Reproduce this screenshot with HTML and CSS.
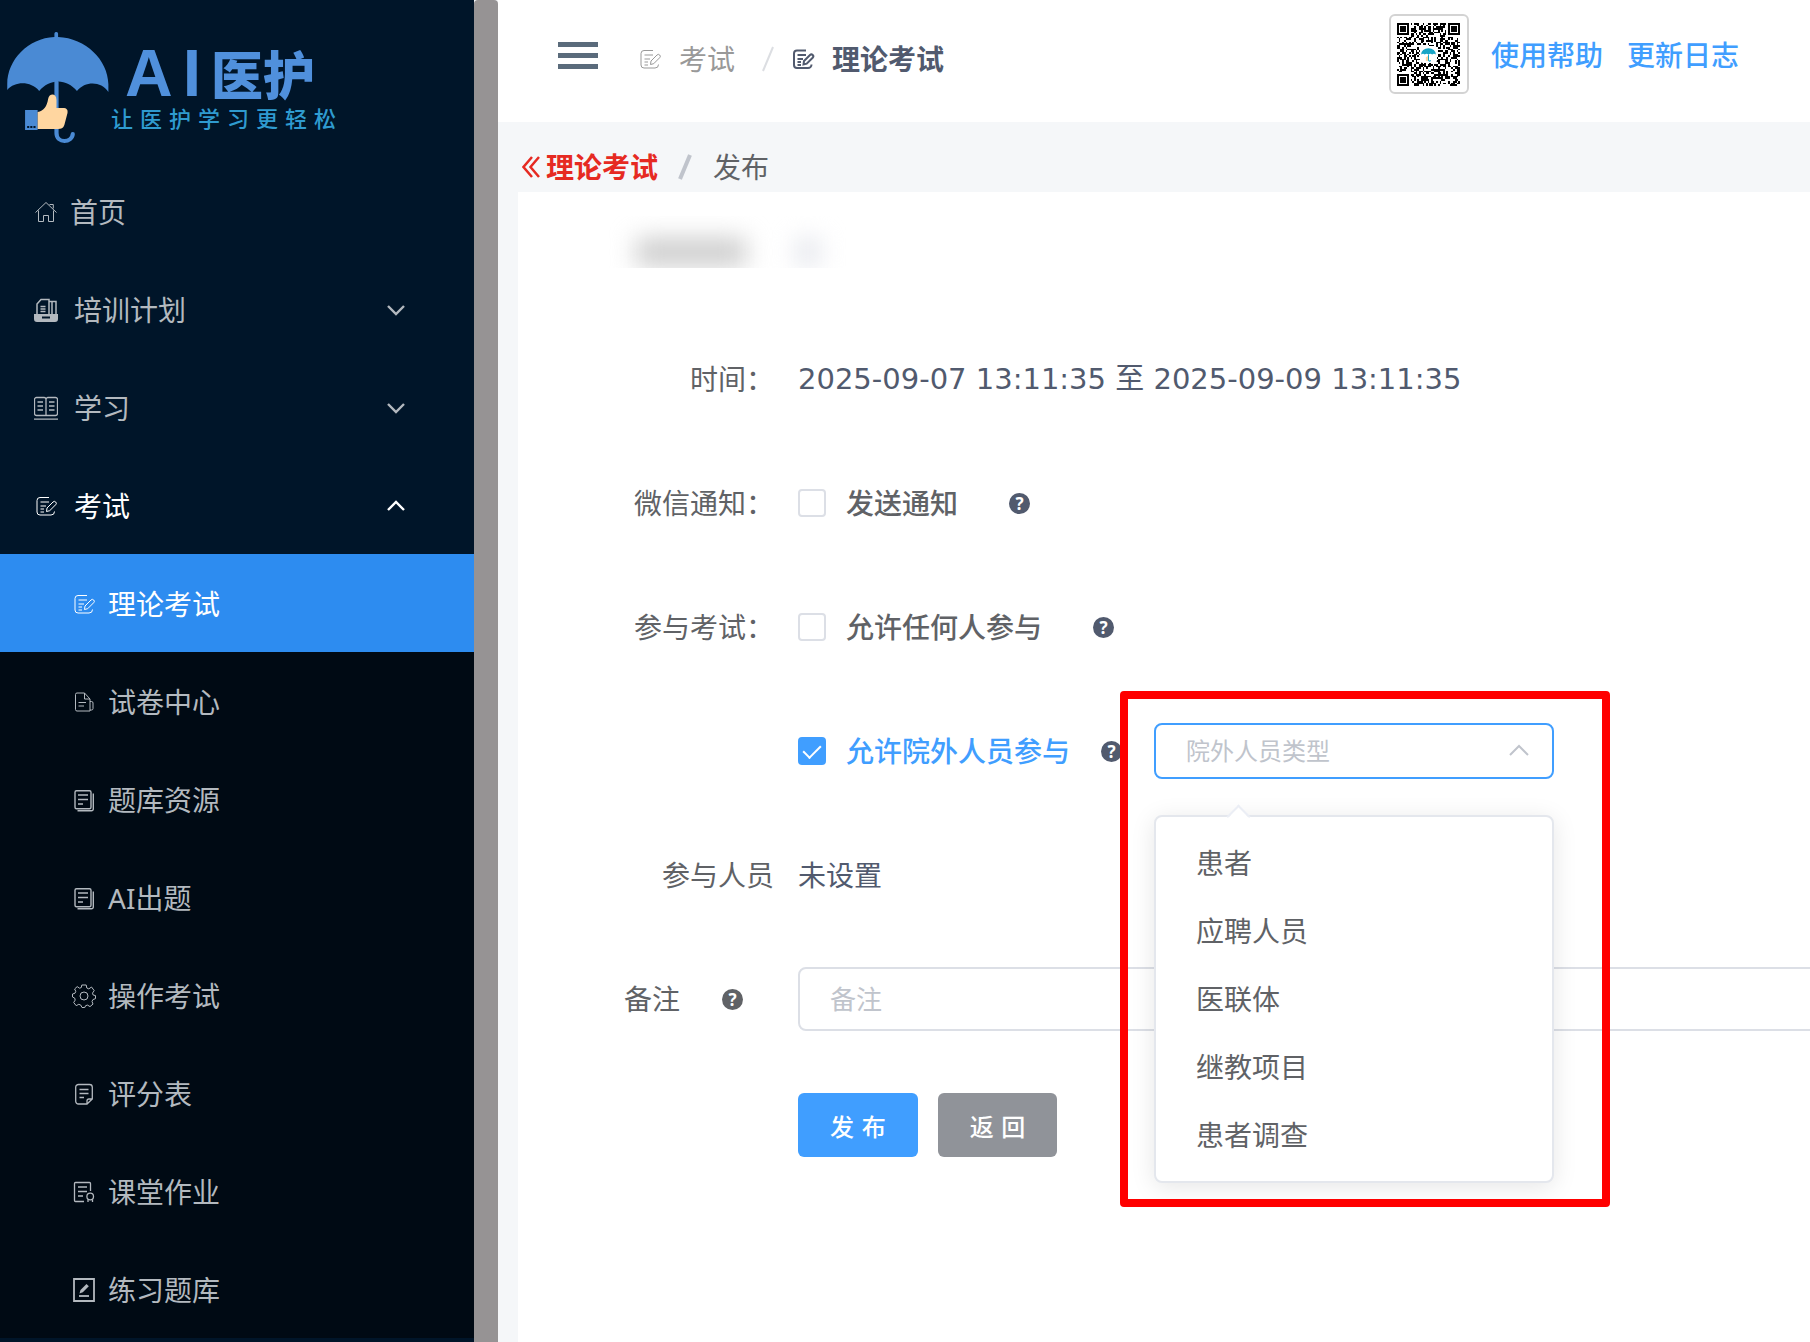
FILE: index.html
```html
<!DOCTYPE html>
<html lang="zh-CN">
<head>
<meta charset="UTF-8" />
<meta name="viewport" content="width=device-width, initial-scale=1.0"/>
<title>AI医护 - 理论考试</title>
<link rel="stylesheet" href="styles.css">
</head>
<body>
<!-- Shared icons -->
<svg class="defs" aria-hidden="true">
  <symbol id="i-exam" viewBox="0 0 24 24">
    <path d="M15 3.500H6a3 3 0 0 0-3 3V18a3 3 0 0 0 3 3h11a3.500 3.500 0 0 0 3.500-3.500M6.500 8H15M6.500 12H12M6.500 15H10M6.500 18H10"/>
    <path d="M12.500 17.500l.5-3.500 6-6a1.800 1.800 0 0 1 2.700 2.700l-6 6z"/>
  </symbol>
  <symbol id="i-bank" viewBox="0 0 24 24">
    <path d="M4.500 2.800h13a1.500 1.500 0 0 1 1.500 1.500v15a1.500 1.500 0 0 1-1.500 1.500h-13A1.500 1.500 0 0 1 3 19.300v-15a1.500 1.500 0 0 1 1.500-1.500zM6 7h10M6 11.500h10M6 16h5M5.500 22.800h14a1.800 1.800 0 0 0 1.800-1.800V5.500" stroke-width="1.400"/>
  </symbol>
  <symbol id="i-down" viewBox="0 0 18 12"><path d="M1 2l8 8 8-8" stroke-width="2.400"/></symbol>
</svg>

<div class="app">
  <aside class="sidebar">
    <div class="logo">
      <svg class="logo-mark" viewBox="0 0 104 114" preserveAspectRatio="none" aria-hidden="true">
        <path fill="#4a8ad4" d="M50 4.500a1.800 1.800 0 0 1 3.500 0V8C80 9 101 31 101.500 55v8c-7-11-22-11-30-1-5-6-11-9.500-18-9.500s-13 3.500-18 9.500c-8-10-23-10-30.500-1v-6C5 31 25 9 50 8z"/>
        <path fill="none" stroke="#4a8ad4" stroke-width="4" stroke-linecap="round" d="M52 53v51c0 11 15 10 15.500 1"/>
        <path fill="#4a8ad4" d="M22 81h12v20H22z"/>
        <path fill="#001529" d="M24 97h2v2h-2zM27 97h2v2h-2zM30 97h2v2h-2z"/>
        <path fill="#ffd6a0" d="M34 83c6-1 9-6 10-13 1-6 8-6 8 1v8h6c4 0 5 2 4.500 5l-3 12c-1 3-3 4-6 4H34z"/>
      </svg>
      <div class="logo-text">
        <div class="logo-name"><span>A</span><span>I</span><b>医护</b></div>
        <div class="logo-slogan">让 医 护 学 习 更 轻 松</div>
      </div>
    </div>

    <nav class="menu">
      <a class="menu-item home" href="#">
        <svg class="icon" viewBox="0 0 24 24"><path d="M1.500 12.500L12 2.500l10.500 10M4.500 10.500V21.500h5v-6h5v6h5v-11M15.500 4.500h3.800v4"/></svg>
        <span>首页</span>
      </a>
      <a class="menu-item" href="#">
        <svg class="icon" viewBox="0 0 24 24"><path d="M3 16V6l4-4.500h8V16M15 3.500h3V16M18 3.500h4V16M6.500 8.500h5M6.500 11h5M6.500 13.500h5" stroke-width="1.500"/><path fill="currentColor" stroke="none" d="M0 16h24v5a3 3 0 0 1-3 3H3a3 3 0 0 1-3-3zM8 18.500v2h8v-2z" fill-rule="evenodd"/></svg>
        <span>培训计划</span>
        <svg class="arrow"><use href="#i-down"/></svg>
      </a>
      <a class="menu-item" href="#">
        <svg class="icon" viewBox="0 0 24 24"><path d="M12 19.500H2.500a2 2 0 0 1-2-2v-14a2 2 0 0 1 2-2H10a2 2 0 0 1 2 2 2 2 0 0 1 2-2h7.500a2 2 0 0 1 2 2v14a2 2 0 0 1-2 2zM12 3v16.500M0 23.200h24M3.500 6H9M3.500 10H9M3.500 14H9M15 6h5.500M15 10h5.500M15 14h5.500" stroke-width="1.300"/></svg>
        <span>学习</span>
        <svg class="arrow"><use href="#i-down"/></svg>
      </a>
      <a class="menu-item open" href="#">
        <svg class="icon"><use href="#i-exam"/></svg>
        <span>考试</span>
        <svg class="arrow"><use href="#i-down"/></svg>
      </a>
      <div class="submenu">
        <a class="menu-item active" href="#"><svg class="icon"><use href="#i-exam"/></svg><span>理论考试</span></a>
        <a class="menu-item" href="#">
          <svg class="icon" viewBox="0 0 24 24"><path d="M18 21H5a1.500 1.500 0 0 1-1.500-1.500v-15A1.500 1.500 0 0 1 5 3h7.500l5.500 6zM12.500 3v6H18M18 11.500h1.500a1.500 1.500 0 0 1 1.500 1.500v5.500a1.500 1.500 0 0 1-1.500 1.500H18M6.500 12.500H14M6.500 16H12"/></svg>
          <span>试卷中心</span>
        </a>
        <a class="menu-item" href="#"><svg class="icon"><use href="#i-bank"/></svg><span>题库资源</span></a>
        <a class="menu-item" href="#"><svg class="icon"><use href="#i-bank"/></svg><span>AI出题</span></a>
        <a class="menu-item" href="#">
          <svg class="icon" viewBox="0 0 24 24"><circle cx="12" cy="12" r="4"/><path d="M9.800 1h4.400l.6 3 2 .9L19.500 3l2.700 3.600-1.700 2.500.6 1.900 2.400.6v3l-2.600 1-.9 1.800 1 2.700-3 2.500-2.500-1.500-1.900.6L12.800 23.500H10l-1.200-2.400-2-.8-2.600 1.400L1.700 18.500l1.500-2.400-.5-2L.5 13V10l2.500-.8.800-1.900L2.600 5 5.200 2.600l2.400 1.600 1.700-.7z"/></svg>
          <span>操作考试</span>
        </a>
        <a class="menu-item" href="#">
          <svg class="icon" viewBox="0 0 24 24"><path d="M15 22H6.500a2.800 2.800 0 0 1-2.800-2.800V5.300a2.800 2.800 0 0 1 2.800-2.800h11a2.800 2.800 0 0 1 2.800 2.800V17zM15 22v-3a2 2 0 0 1 2-2h3.300M7.500 7.500h9M7.500 11.500h9M7.500 15.500H12" stroke-width="1.300"/></svg>
          <span>评分表</span>
        </a>
        <a class="menu-item" href="#">
          <svg class="icon" viewBox="0 0 24 24"><path d="M12 21.500H3.500a1 1 0 0 1-1-1v-17a1 1 0 0 1 1-1h14a1 1 0 0 1 1 1V11M6 7h9M6 11.500h9M6 16h5M16 19.500V22M20.500 19.500V22" stroke-width="1.300"/><circle cx="18.200" cy="16.500" r="3.300" stroke-width="1.300"/></svg>
          <span>课堂作业</span>
        </a>
        <a class="menu-item" href="#">
          <svg class="icon" viewBox="0 0 24 24"><path d="M2 1h20v22H2z" stroke-width="1.800"/><path d="M7 18h10" stroke-width="1.800"/><path fill="currentColor" stroke="none" d="M7.500 15.500l1-3.500 6-6 2.300 2.300-6 6z"/></svg>
          <span>练习题库</span>
        </a>
      </div>
    </nav>
  </aside>
  <div class="gutter"></div>

  <div class="main">
    <header class="header">
      <button class="hamburger" type="button" aria-label="菜单"><i></i><i></i><i></i></button>
      <nav class="crumbs">
        <a class="crumb" href="#"><svg class="icon"><use href="#i-exam"/></svg>考试</a>
        <svg class="slash" viewBox="0 0 12 26"><path d="M11 1L1 25"/></svg>
        <a class="crumb current" href="#"><svg class="icon"><use href="#i-exam"/></svg>理论考试</a>
      </nav>
      <div class="qr">
        <svg id="qr" viewBox="0 0 37 37" shape-rendering="crispEdges"></svg>
        <svg class="qr-logo" viewBox="0 0 16 16"><path fill="#18a5c6" d="M1 8a7 6 0 0 1 14 0q-2-1.500-3.500 0-1.700-1.500-3.500 0Q6 6.500 4.500 8 3 6.500 1 8z"/><path fill="#ffd6a0" d="M5.500 10.500L8 9v5H5.500z"/><path fill="none" stroke="#18a5c6" d="M8 8v5.500q.8 1.500 2 0"/></svg>
      </div>
      <a class="top-link" href="#">使用帮助</a>
      <a class="top-link" href="#">更新日志</a>
    </header>

    <div class="page-nav">
      <a class="back" href="#"><svg class="back-icon" viewBox="0 0 18 22"><path d="M10 1L1.500 11 10 21M17 1L8.500 11 17 21"/></svg>理论考试</a>
      <svg class="slash bold" viewBox="0 0 14 26"><path d="M12 1L2 25"/></svg>
      <span>发布</span>
    </div>

    <form class="card">
      <div class="masked"><i></i><i class="faint"></i></div>

      <div class="row">
        <div class="label">时间：</div>
        <div class="content date">2025-09-07 13:11:35 至 2025-09-09 13:11:35</div>
      </div>

      <div class="row">
        <div class="label">微信通知：</div>
        <div class="content">
          <label class="check"><input type="checkbox">发送通知</label>
          <span class="help">?</span>
        </div>
      </div>

      <div class="row">
        <div class="label">参与考试：</div>
        <div class="content">
          <label class="check"><input type="checkbox">允许任何人参与</label>
          <span class="help">?</span>
        </div>
      </div>

      <div class="row">
        <div class="label"></div>
        <div class="content">
          <label class="check near"><input type="checkbox" checked>允许院外人员参与</label>
          <span class="help">?</span>
          <div class="picker">
            <select aria-label="院外人员类型">
              <option>院外人员类型</option>
            </select>
            <svg class="picker-arrow" viewBox="0 0 20 12"><path d="M1 11l9-9 9 9"/></svg>
            <ul class="dropdown">
              <li>患者</li>
              <li>应聘人员</li>
              <li>医联体</li>
              <li>继教项目</li>
              <li>患者调查</li>
            </ul>
            <div class="highlight"></div>
          </div>
        </div>
      </div>

      <div class="row">
        <div class="label">参与人员</div>
        <div class="content">未设置</div>
      </div>

      <div class="row">
        <div class="label with-help"><label for="remark">备注</label><span class="help">?</span></div>
        <div class="content"><input class="text-input" type="text" id="remark" placeholder="备注"></div>
      </div>

      <div class="row actions">
        <div class="label"></div>
        <div class="content">
          <button class="btn primary" type="button">发 布</button>
          <button class="btn info" type="button">返 回</button>
        </div>
      </div>
    </form>
  </div>
</div>

<script src="qr.js"></script>
</body>
</html>
```
FILE: styles.css
```css
* {
  box-sizing: border-box;
}
body {
  margin: 0;
  font-family: "Noto Sans", "Noto Sans CJK SC", sans-serif;
  font-size: 28px;
  line-height: 40px;
  color: #515a6e;
  background: #f5f7f9;
  overflow: hidden;
}
a {
  color: inherit;
  text-decoration: none;
}
svg {
  display: block;
  flex: none;
  fill: none;
  stroke: currentColor;
}
.defs {
  position: absolute;
  width: 0;
  height: 0;
}
.icon {
  width: 24px;
  height: 24px;
}
.app {
  display: flex;
  height: 100vh;
}

/* Sidebar */
.sidebar {
  flex: none;
  width: 474px;
  background: #001529;
  color: #b3b9bf;
  overflow: hidden;
}
.gutter {
  flex: none;
  width: 24px;
  background: #969394;
  border-radius: 4px 4px 0 0;
}
.logo {
  display: flex;
  height: 162px;
  padding: 29px 0 0 2px;
}
.logo-mark {
  width: 109px;
  height: 114px;
  stroke: none;
}
.logo-text {
  padding-top: 12px;
}
.logo-name {
  display: flex;
  align-items: center;
  gap: 10px;
  height: 64px;
  padding-left: 14px;
  font-family: "Liberation Sans", Arial, sans-serif;
  font-size: 66px;
  font-weight: bold;
  color: #5090dc;
}
.logo-name b {
  font-family: "Noto Sans CJK SC", sans-serif;
  font-size: 52px;
  font-weight: 900;
}
.logo-slogan {
  font-family: "DejaVu Sans", "Noto Sans CJK SC", sans-serif;
  font-size: 22px;
  font-weight: 500;
  line-height: 30px;
  color: #2f9bd0;
}
.menu-item {
  display: flex;
  align-items: center;
  gap: 16px;
  height: 98px;
  padding: 2px 69px 0 34px;
}
.menu-item.home {
  gap: 12px;
}
.menu-item.open {
  color: #fff;
}
.arrow {
  width: 18px;
  height: 12px;
  margin-left: auto;
}
.open .arrow {
  transform: rotate(180deg);
}
.submenu {
  background: #000a14;
}
.submenu .menu-item {
  gap: 12px;
  padding-left: 72px;
}
.submenu .active {
  background: #2d8cf0;
  color: #fff;
}

/* Header */
.main {
  flex: 1;
  display: flex;
  flex-direction: column;
  min-width: 0;
  overflow: hidden;
}
.header {
  display: flex;
  align-items: center;
  height: 122px;
  padding: 0 71px 12px 60px;
  background: #fff;
}
.hamburger {
  display: flex;
  flex-direction: column;
  gap: 6px;
  padding: 0;
  border: 0;
  background: none;
}
.hamburger i {
  width: 40px;
  height: 5px;
  background: #5a6b7b;
}
.crumbs {
  display: flex;
  align-items: center;
  margin-right: auto;
  padding: 8px 0 0 40px;
}
.crumb {
  display: flex;
  align-items: center;
  gap: 17px;
  color: #999;
}
.crumb.current {
  color: #515a6e;
  font-weight: bold;
}
.crumb.current .icon {
  stroke-width: 2;
}
.slash {
  width: 12px;
  height: 26px;
  margin: 0 17px 0 27px;
  stroke: #dcdee2;
  stroke-width: 2;
}
.slash.bold {
  width: 14px;
  margin: 0 21px 0 20px;
  stroke: #c0c4cc;
  stroke-width: 4;
}
.qr {
  display: grid;
  place-items: center;
  width: 80px;
  height: 80px;
  margin-bottom: 2px;
  border: 2px solid #d3d3d3;
  border-radius: 6px;
}
.qr svg {
  grid-area: 1 / 1;
  width: 63px;
  height: 63px;
  fill: #000;
  stroke: none;
}
.qr .qr-logo {
  width: 17px;
  height: 17px;
  background: #fff;
  border-radius: 3px;
}
.top-link {
  margin-left: 24px;
  color: #409eff;
  font-weight: 500;
}
.qr + .top-link {
  margin-left: 22px;
}
.page-nav {
  display: flex;
  align-items: center;
  height: 70px;
  padding: 20px 0 0 24px;
  color: #606266;
}
.back {
  display: flex;
  align-items: center;
  gap: 6px;
  color: #e62a22;
  font-weight: bold;
}
.back-icon {
  width: 18px;
  height: 22px;
  stroke-width: 2.5;
}

/* Form */
.card {
  flex: 1;
  width: 1500px;
  margin-left: 20px;
  padding-top: 24px;
  background: #fff;
}
.masked {
  display: flex;
  gap: 50px;
  height: 52px;
  margin-bottom: 79px;
  padding: 22px 0 0 118px;
  overflow: hidden;
}
.masked i {
  width: 110px;
  height: 28px;
  background: #ccc;
  filter: blur(12px);
}
.masked .faint {
  width: 24px;
  background: #e4e6ec;
}
.row {
  display: flex;
  align-items: center;
  height: 64px;
  margin-bottom: 60px;
}
.label {
  width: 256px;
  margin-right: 24px;
  text-align: right;
  color: #606266;
}
.with-help {
  display: flex;
  align-items: center;
  justify-content: flex-end;
  gap: 42px;
  padding-right: 31px;
}
.content {
  flex: 1;
  display: flex;
  align-items: center;
}
.date {
  font-family: "DejaVu Sans", "Noto Sans CJK SC", sans-serif;
  font-size: 29px;
}
.check {
  display: flex;
  align-items: center;
  gap: 20px;
  margin-right: 51px;
  color: #606266;
  font-weight: 500;
}
.check.near {
  margin-right: 31px;
  color: #409eff;
}
.check input {
  appearance: none;
  display: grid;
  place-items: center;
  width: 28px;
  height: 28px;
  margin: 0;
  border: 2px solid #dcdfe6;
  border-radius: 4px;
  background: #fff;
}
.check input:checked {
  border-color: #409eff;
  background: #409eff;
}
.check input:checked::after {
  content: "";
  width: 8px;
  height: 15px;
  margin-bottom: 4px;
  border: solid #fff;
  border-width: 0 2px 2px 0;
  transform: rotate(45deg);
}
.help {
  width: 21px;
  height: 21px;
  border-radius: 50%;
  background: #515a6e;
  color: #fff;
  font-size: 17px;
  font-weight: bold;
  line-height: 21px;
  text-align: center;
}
.label .help {
  background: #606266;
}
.picker {
  position: relative;
  margin-left: 32px;
}
.picker select {
  appearance: none;
  display: block;
  width: 400px;
  height: 56px;
  padding: 0 60px 0 30px;
  border: 2px solid #409eff;
  border-radius: 8px;
  background: #fff;
  color: #c0c4cc;
  font: inherit;
  font-size: 24px;
}
.picker-arrow {
  position: absolute;
  top: 21px;
  right: 25px;
  width: 20px;
  height: 12px;
  color: #c0c4cc;
  stroke-width: 2;
}
.dropdown {
  position: absolute;
  z-index: 1;
  top: 92px;
  left: 0;
  width: 400px;
  margin: 0;
  padding: 12px 0;
  list-style: none;
  border: 2px solid #e4e7ed;
  border-radius: 8px;
  background: #fff;
  box-shadow: 0 4px 24px rgba(0, 0, 0, 0.1);
  color: #606266;
}
.dropdown::before {
  content: "";
  position: absolute;
  top: -9px;
  left: 74px;
  width: 15px;
  height: 15px;
  border: solid #ebeef5;
  border-width: 2px 0 0 2px;
  background: linear-gradient(135deg, #fff 50%, transparent 50%);
  transform: rotate(45deg);
}
.dropdown li {
  padding: 0 40px;
  line-height: 68px;
}
/* red marker round the picker and its list */
.highlight {
  position: absolute;
  z-index: 2;
  top: -32px;
  left: -34px;
  width: 490px;
  height: 516px;
  border: 8px solid #f00;
  border-radius: 4px;
  pointer-events: none;
}
.text-input {
  width: 100%;
  height: 64px;
  padding: 0 30px;
  border: 2px solid #dcdfe6;
  border-radius: 8px;
  font: inherit;
  font-size: 26px;
}
.text-input::placeholder {
  color: #c0c4cc;
}
.actions {
  padding-top: 4px;
}
.actions .content {
  gap: 20px;
}
.btn {
  height: 64px;
  padding: 0 32px;
  border: 0;
  border-radius: 6px;
  color: #fff;
  font-family: "DejaVu Sans", "Noto Sans CJK SC", sans-serif;
  font-size: 24px;
  font-weight: 500;
}
.primary {
  background: #409eff;
}
.info {
  background: #909399;
}
```
FILE: qr.js
```js
// Fill the QR block: three finder squares and a fixed pattern of modules
const SIZE = 37;
let seed = 20250907;
let d = "";

function next() {
  seed = (seed * 1103515245 + 12345) % 2147483648;
  return seed / 2147483648;
}

function inFinder(x, y) {
  const left = x < 8, right = x > SIZE - 9;
  const top = y < 8, bottom = y > SIZE - 9;
  return (left && top) || (right && top) || (left && bottom);
}

for (let y = 0; y < SIZE; y++) {
  for (let x = 0; x < SIZE; x++) {
    const dark = next() > 0.48;
    if (dark && !inFinder(x, y)) d += `M${x} ${y}h1v1h-1z`;
  }
}

[[0, 0], [SIZE - 7, 0], [0, SIZE - 7]].forEach(([x, y]) => {
  d += `M${x} ${y}h7v7h-7zM${x + 1} ${y + 1}v5h5v-5zM${x + 2} ${y + 2}h3v3h-3z`;
});

const path = document.createElementNS("http://www.w3.org/2000/svg", "path");
path.setAttribute("d", d);
document.getElementById("qr").appendChild(path);
```
